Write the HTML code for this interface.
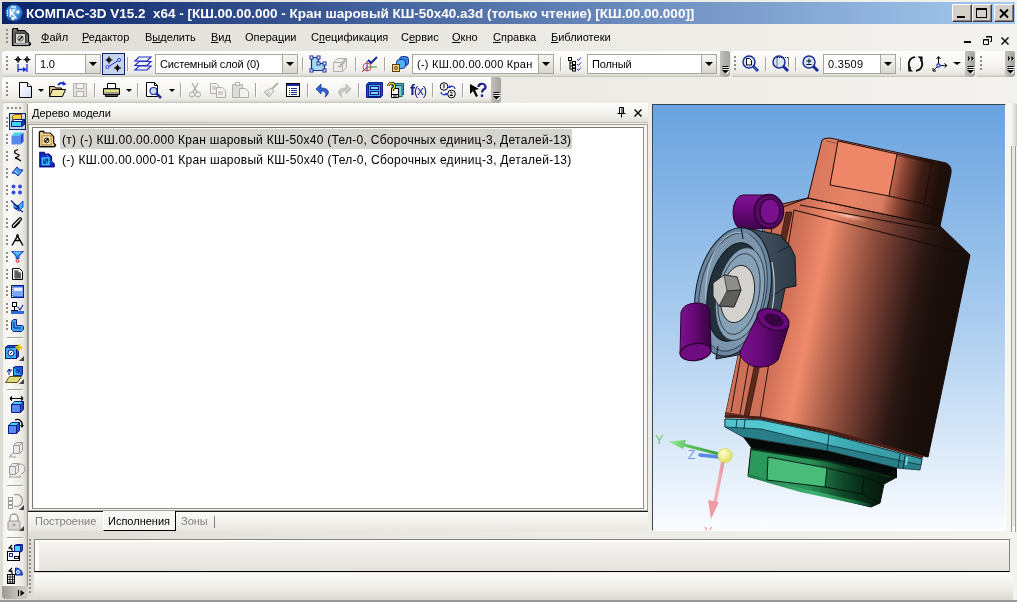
<!DOCTYPE html>
<html><head><meta charset="utf-8">
<style>
*{box-sizing:border-box}
body{margin:0;width:1017px;height:602px;overflow:hidden;background:linear-gradient(to right,#DFDCD4 0%,#E9E7E1 35%,#F3F2EE 100%);position:relative;font-family:"Liberation Sans",sans-serif;font-size:11px;color:#000}
.a{position:absolute}
svg{position:absolute;overflow:visible}
.t{position:absolute;white-space:pre;line-height:13px;will-change:transform}
.tb{position:absolute;border-radius:3px;background:linear-gradient(to bottom,#FEFEFD 0%,#F7F6F3 45%,#ECEAE5 85%,#D9D7CF 96%,#B9B7B0 100%)}
.eh{position:absolute;width:10px;border-radius:0 3px 3px 0;background:linear-gradient(to right,#C4C2BC,#B2B0AA 50%,#A4A29C)}
.grip{position:absolute;width:2px;background:repeating-linear-gradient(to bottom,#8E8C86 0 2px,transparent 2px 4px)}
.sep{position:absolute;width:1px;height:14px;background:#A7A59E;box-shadow:1px 0 0 #fff}
.cb{position:absolute;height:20px;background:#fff;border:1px solid #A8A69F;font-size:11px}
.cb span{position:absolute;left:4px;top:3px;white-space:pre;line-height:13px;will-change:transform;letter-spacing:-0.15px}
.cbb{position:absolute;right:0;top:0;width:15px;height:18px;background:linear-gradient(to bottom,#F7F6F3,#D9D7CF);border-left:1px solid #A8A69F}
.cbb:after{content:"";position:absolute;left:3px;top:7px;border-left:4px solid transparent;border-right:4px solid transparent;border-top:4px solid #000}
.dd{position:absolute;width:0;height:0;border-left:3px solid transparent;border-right:3px solid transparent;border-top:3px solid #000}
.cap{position:absolute;top:4px;width:20px;height:18px;background:#D4D0C8;border:1px solid;border-color:#fff #404040 #404040 #fff;box-shadow:inset -1px -1px 0 #808080}
.u{text-decoration:underline}
</style></head><body>
<!-- title bar -->
<div class="a" style="left:2px;top:2px;width:1013px;height:22px;background:linear-gradient(to right,#0A246A,#A6CAF0)"></div>
<svg style="left:5px;top:4px" width="18" height="18" viewBox="0 0 18 18">
<defs><radialGradient id="kg" cx="45%" cy="40%" r="60%"><stop offset="0" stop-color="#8ACBF8"/><stop offset="0.6" stop-color="#3F8AD8"/><stop offset="1" stop-color="#1A55B0"/></radialGradient></defs>
<circle cx="9" cy="9" r="8.5" fill="url(#kg)"/>
<path d="M2.5 6v6" stroke="#fff" stroke-width="1" stroke-dasharray="1.5 1"/>
<path d="M5.5 5v8M6 9.5l4-4.5M6.5 9l5 5.5" stroke="#fff" stroke-width="1.6" fill="none"/>
<path d="M6 3h5" stroke="#fff" stroke-width="1.2"/>
<circle cx="13" cy="8" r="1.7" fill="#fff"/><circle cx="8" cy="14.5" r="1.7" fill="#fff"/>
</svg>
<div class="t" style="left:26px;top:6px;font-weight:bold;font-size:12px;line-height:16px;color:#fff;transform:scaleX(1.124);transform-origin:0 0">КОМПАС-3D V15.2  x64 - [КШ.00.00.000 - Кран шаровый КШ-50х40.a3d (только чтение) [КШ.00.00.000]]</div>
<div class="cap" style="left:952px"></div>
<div class="cap" style="left:972px"></div>
<div class="cap" style="left:994px"></div>
<div class="a" style="left:957px;top:16px;width:8px;height:2px;background:#000"></div>
<div class="a" style="left:976px;top:8px;width:11px;height:10px;border:1px solid #000;border-top-width:2px"></div>
<svg style="left:999px;top:9px" width="10" height="9" viewBox="0 0 10 9"><path d="M1 0.5L9 8.5M9 0.5L1 8.5" stroke="#000" stroke-width="1.8"/></svg>

<!-- menu bar -->
<div class="grip" style="left:6px;top:29px;height:16px"></div>
<svg style="left:11px;top:27px" width="20" height="20" viewBox="0 0 20 20">
<path d="M1.5 2.5l1-1h4v2h7l4 4v7l2 2v1h-1v1h-17z" fill="#7A7A78" stroke="#000" stroke-width="1.2"/>
<path d="M3 4h10l3 3v9H3z" fill="#5A5A58"/>
<rect x="4.5" y="6.5" width="10" height="10" fill="#D8D8D6" stroke="#3A3A3A" stroke-width="1"/>
<circle cx="9.5" cy="11.5" r="2.6" fill="#fff" stroke="#202020" stroke-width="0.8"/>
<path d="M8 13l3.5-3.5" stroke="#000" stroke-width="1.4"/>
<path d="M2 18.5h15.5" stroke="#000" stroke-width="1.2"/><path d="M3 17h14" stroke="#E8E8E8" stroke-width="1"/>
</svg>
<div class="t" style="left:41px;top:31px"><span class="u">Ф</span>айл</div>
<div class="t" style="left:82px;top:31px"><span class="u">Р</span>едактор</div>
<div class="t" style="left:145px;top:31px">В<span class="u">ы</span>делить</div>
<div class="t" style="left:211px;top:31px"><span class="u">В</span>ид</div>
<div class="t" style="left:245px;top:31px">Опера<span class="u">ц</span>ии</div>
<div class="t" style="left:311px;top:31px">С<span class="u">п</span>ецификация</div>
<div class="t" style="left:401px;top:31px">С<span class="u">е</span>рвис</div>
<div class="t" style="left:452px;top:31px"><span class="u">О</span>кно</div>
<div class="t" style="left:493px;top:31px"><span class="u">С</span>правка</div>
<div class="t" style="left:551px;top:31px"><span class="u">Б</span>иблиотеки</div>
<div class="a" style="left:964px;top:41px;width:7px;height:2px;background:#000"></div>
<svg style="left:983px;top:36px" width="9" height="9" viewBox="0 0 9 9"><path d="M3 .5h5.5v5H7M.5 3.5h5v5h-5z" fill="none" stroke="#000" stroke-width="1"/><path d="M3 1h6M1 4h5" stroke="#000" stroke-width="1"/></svg>
<svg style="left:1001px;top:37px" width="8" height="8" viewBox="0 0 8 8"><path d="M.5 .5l7 7M7.5 .5l-7 7" stroke="#000" stroke-width="1.4"/></svg>

<!-- TOOLBARS -->
<!-- toolbar row 1 -->
<div class="tb" style="left:2px;top:51px;width:722px;height:26px"></div>
<div class="eh" style="left:720px;top:51px;height:26px"></div>
<div class="tb" style="left:731px;top:51px;width:238px;height:26px"></div>
<div class="eh" style="left:965px;top:51px;height:26px"></div>
<div class="tb" style="left:976px;top:51px;width:34px;height:26px"></div>
<div class="eh" style="left:1005px;top:51px;height:26px"></div>
<!-- toolbar row 2 -->
<div class="tb" style="left:2px;top:77px;width:494px;height:26px"></div>
<div class="eh" style="left:491px;top:77px;height:26px"></div>
<!-- end handle glyphs -->
<svg style="left:722px;top:66px" width="8" height="8" viewBox="0 0 8 8"><path d="M1.5 1.5h6M1.5 3.5h6M2 5.5h5l-2.5 2.5z" stroke="#fff" stroke-width="1" fill="#fff"/><path d="M.5 .5h6M.5 2.5h6" stroke="#000" stroke-width="1"/><path d="M0 4h7l-3.5 3.5z" fill="#000"/></svg><svg style="left:967px;top:66px" width="8" height="8" viewBox="0 0 8 8"><path d="M1.5 1.5h6M1.5 3.5h6M2 5.5h5l-2.5 2.5z" stroke="#fff" stroke-width="1" fill="#fff"/><path d="M.5 .5h6M.5 2.5h6" stroke="#000" stroke-width="1"/><path d="M0 4h7l-3.5 3.5z" fill="#000"/></svg><svg style="left:968px;top:56px" width="7" height="6" viewBox="0 0 7 6"><path d="M1 1l2 2-2 2zM4.5 1l2 2-2 2z" fill="#fff"/><path d="M0 0l2.5 2.5L0 5zM3.5 0l2.5 2.5L3.5 5z" fill="#000"/></svg><svg style="left:1007px;top:66px" width="8" height="8" viewBox="0 0 8 8"><path d="M1.5 1.5h6M1.5 3.5h6M2 5.5h5l-2.5 2.5z" stroke="#fff" stroke-width="1" fill="#fff"/><path d="M.5 .5h6M.5 2.5h6" stroke="#000" stroke-width="1"/><path d="M0 4h7l-3.5 3.5z" fill="#000"/></svg><svg style="left:1008px;top:56px" width="7" height="6" viewBox="0 0 7 6"><path d="M1 1l2 2-2 2zM4.5 1l2 2-2 2z" fill="#fff"/><path d="M0 0l2.5 2.5L0 5zM3.5 0l2.5 2.5L3.5 5z" fill="#000"/></svg><svg style="left:493px;top:92px" width="8" height="8" viewBox="0 0 8 8"><path d="M1.5 1.5h6M1.5 3.5h6M2 5.5h5l-2.5 2.5z" stroke="#fff" stroke-width="1" fill="#fff"/><path d="M.5 .5h6M.5 2.5h6" stroke="#000" stroke-width="1"/><path d="M0 4h7l-3.5 3.5z" fill="#000"/></svg>
<!-- grips -->
<div class="grip" style="left:6px;top:56px;height:15px"></div>
<div class="grip" style="left:6px;top:82px;height:15px"></div>
<div class="grip" style="left:734px;top:56px;height:15px"></div>
<div class="grip" style="left:980px;top:56px;height:15px"></div>

<!-- row1 items -->
<svg style="left:14px;top:56px" width="17" height="17" viewBox="0 0 17 17">
<g stroke="#000" stroke-width="1" fill="none"><circle cx="4" cy="3.5" r="1.8"/><path d="M4 0v7M0.5 3.5h7"/><circle cx="13" cy="3.5" r="1.8"/><path d="M13 0v7M9.5 3.5h7"/></g>
<g stroke="#1E2FD0" stroke-width="1.3" fill="none"><path d="M4 8v8M13 8v8M4 13.5h8"/></g><path d="M9 11l4 2.5-4 2.5z" fill="#1E2FD0"/>
</svg>
<div class="cb" style="left:35px;top:54px;width:66px"><span>1.0</span><div class="cbb"></div></div>
<div class="a" style="left:102px;top:53px;width:23px;height:22px;background:#C6D3EC;border:1px solid #0A246A"></div>
<svg style="left:105px;top:56px" width="17" height="17" viewBox="0 0 17 17">
<path d="M3 11L14 4" stroke="#1E2FD0" stroke-width="1"/>
<circle cx="2.5" cy="11" r="1.5" fill="#fff" stroke="#1E2FD0"/><circle cx="14" cy="4" r="1.5" fill="#fff" stroke="#1E2FD0"/>
<g stroke="#000" stroke-width="1.1" fill="none"><circle cx="4" cy="4" r="1.6"/><path d="M4 .5v7M.5 4h7"/><circle cx="12.5" cy="12" r="1.6"/><path d="M12.5 8.5v7M9 12h7"/></g>
</svg>
<div class="sep" style="left:127px;top:57px"></div>
<svg style="left:134px;top:56px" width="18" height="15" viewBox="0 0 18 15">
<g stroke="#1E2FD0" stroke-width="1.2" fill="none"><path d="M5 1h12l-4 4H1zM5 5.5h12l-4 4H1zM5 10h12l-4 4H1z"/></g>
</svg>
<div class="cb" style="left:155px;top:54px;width:143px"><span>Системный слой (0)</span><div class="cbb"></div></div>
<div class="sep" style="left:302px;top:57px"></div>
<svg style="left:310px;top:56px" width="17" height="16" viewBox="0 0 17 16">
<path d="M1.5 1.5h7v6h6v7h-13z" fill="#A9D9EC" stroke="#1A2C9A" stroke-width="1.2"/>
<g fill="#fff" stroke="#1A2C9A" stroke-width="1"><rect x="0" y="0" width="3" height="3"/><rect x="7" y="0" width="3" height="3"/><rect x="7" y="6" width="3" height="3"/><rect x="13" y="6" width="3" height="3"/><rect x="13" y="13" width="3" height="3"/><rect x="0" y="13" width="3" height="3"/></g>
</svg>
<svg style="left:332px;top:56px" width="16" height="16" viewBox="0 0 16 16">
<path d="M1.5 6.5l4-4h9v9l-4 4h-9z" fill="#EEEDEA" stroke="#B3B1AC" stroke-width="1"/><path d="M1.5 6.5h9v9M10.5 6.5l4-4" fill="none" stroke="#B3B1AC"/>
<path d="M6 11l7-9 2 2-7 8z" fill="#B8B6B0"/>
</svg>
<div class="sep" style="left:355px;top:57px"></div>
<svg style="left:361px;top:55px" width="18" height="18" viewBox="0 0 18 18">
<path d="M7 5l3 3 6-6" stroke="#1A2C9A" stroke-width="2" fill="none"/>
<path d="M6 6v10" stroke="#1E2FD0" stroke-width="1"/><path d="M6 12h10" stroke="#2A9A30" stroke-width="1"/><path d="M1 17l5-5" stroke="#E02020" stroke-width="1"/>
<circle cx="6" cy="12" r="4" fill="none" stroke="#C03030" stroke-width="0.8"/>
</svg>
<div class="sep" style="left:384px;top:57px"></div>
<svg style="left:392px;top:56px" width="17" height="16" viewBox="0 0 17 16">
<rect x="7.5" y="0.5" width="9" height="9" rx="3" fill="#2A8EE0" stroke="#1A2C9A"/>
<rect x="4.5" y="3.5" width="9" height="9" rx="3" fill="#4FB2F0" stroke="#1A2C9A"/>
<rect x="0.5" y="8.5" width="7" height="7" fill="#F3D27A" stroke="#5A4010"/><circle cx="4" cy="12" r="1.5" fill="none" stroke="#5A4010"/>
</svg>
<div class="cb" style="left:412px;top:54px;width:142px"><span style="letter-spacing:0.25px">(-) КШ.00.00.000 Кран</span><div class="cbb"></div></div>
<div class="sep" style="left:560px;top:57px"></div>
<svg style="left:567px;top:56px" width="16" height="16" viewBox="0 0 16 16">
<g fill="none" stroke="#000" stroke-width="1"><rect x="1.5" y="1.5" width="3" height="3"/><path d="M3 4.5v9M3 7h3M3 10h3M3 13h3"/><rect x="5.5" y="5.5" width="3" height="3"/><rect x="5.5" y="9.5" width="3" height="3"/><rect x="5.5" y="12" width="3" height="3"/></g>
<path d="M10 3l1.5 1.5L14 1.5M10 8l1.5 1.5L14 6.5M10 13l1.5 1.5L14 11.5" stroke="#1E2FD0" stroke-width="1" fill="none"/>
</svg>
<div class="cb" style="left:587px;top:54px;width:130px"><span>Полный</span><div class="cbb"></div></div>

<!-- toolbar 3 -->
<svg style="left:742px;top:55px" width="18" height="18" viewBox="0 0 18 18">
<path d="M11 11l5 5" stroke="#1A2C9A" stroke-width="3"/><path d="M11.5 11.5l4 4" stroke="#6A8CE0" stroke-width="1"/>
<circle cx="7" cy="7" r="6" fill="#D8E6FA" stroke="#1A2C9A" stroke-width="1.5"/>
<path d="M4.5 3.5h3l2 2v4.5h-5z" fill="#fff" stroke="#000" stroke-width="1"/>
</svg>
<div class="sep" style="left:765px;top:57px"></div>
<svg style="left:772px;top:55px" width="18" height="18" viewBox="0 0 18 18">
<path d="M11 11l5 5" stroke="#1A2C9A" stroke-width="3"/>
<circle cx="7" cy="7" r="6" fill="#D8E6FA" stroke="#1A2C9A" stroke-width="1.5"/>
<path d="M5 2.5h12M16.5 2.5v9M5 2.5v9" stroke="#000" stroke-width="1" stroke-dasharray="1 1" fill="none"/>
</svg>
<div class="sep" style="left:795px;top:57px"></div>
<svg style="left:802px;top:55px" width="18" height="18" viewBox="0 0 18 18">
<path d="M11 11l5 5" stroke="#1A2C9A" stroke-width="3"/>
<circle cx="7" cy="7" r="6" fill="#D8E6FA" stroke="#1A2C9A" stroke-width="1.5"/>
<path d="M7 3.5v5M4.5 6h5M4.5 9.5h5" stroke="#000" stroke-width="1"/>
</svg>
<div class="cb" style="left:823px;top:54px;width:73px"><span style="letter-spacing:0.3px">0.3509</span><div class="cbb"></div></div>
<div class="sep" style="left:900px;top:57px"></div>
<svg style="left:906px;top:55px" width="19" height="18" viewBox="0 0 19 18">
<path d="M9 2.2A6.8 6.8 0 0 0 4.5 13.5" stroke="#000" stroke-width="1.8" fill="none"/>
<path d="M2 11.5L7 16.5L2.5 16.5Z" fill="#000"/>
<path d="M10 15.8A6.8 6.8 0 0 0 14.5 4.5" stroke="#000" stroke-width="1.8" fill="none"/>
<path d="M11.5 1.5L16.5 1.5L16.5 6Z" fill="#000"/>
</svg>
<svg style="left:931px;top:55px" width="18" height="18" viewBox="0 0 18 18">
<path d="M7.5 10.5V2M7.5 10.5H16M7.5 10.5L2 16" stroke="#000" stroke-width="1" fill="none"/>
<path d="M5.5 4l2-2.5 2 2.5M13.5 8.5l2.5 2-2.5 2M2 13v3h3" stroke="#000" stroke-width="1" fill="none"/>
<circle cx="7.5" cy="10.5" r="1.6" fill="#fff" stroke="#1E2FD0" stroke-width="1.2"/>
</svg>
<div class="dd" style="left:953px;top:62px;border-width:3px 4px 0 4px;border-left-color:transparent;border-right-color:transparent"></div>

<!-- row2 items -->
<svg style="left:19px;top:82px" width="13" height="16" viewBox="0 0 13 16">
<defs><linearGradient id="pg" x1="0" y1="0" x2="1" y2="1"><stop offset="0" stop-color="#fff"/><stop offset="1" stop-color="#D5E0F5"/></linearGradient></defs>
<path d="M.5 .5h8l4 4v11h-12z" fill="url(#pg)" stroke="#000"/><path d="M8.5 .5v4h4" fill="#fff" stroke="#000"/>
</svg>
<div class="dd" style="left:38px;top:89px;border-width:3px 3px 0 3px"></div>
<svg style="left:49px;top:81px" width="18" height="16" viewBox="0 0 18 16">
<path d="M.5 5.5h5l1 1.5h6v8h-12z" fill="#D6C47A" stroke="#000"/>
<path d="M.5 15.5l3-7h13l-3 7z" fill="#F3E7A8" stroke="#000"/>
<path d="M9 4A5 5 0 0 1 15.5 3" stroke="#1E2FD0" stroke-width="2" fill="none"/><path d="M14 0l3.5 3.5-4 1z" fill="#1E2FD0"/>
</svg>
<svg style="left:73px;top:83px" width="14" height="14" viewBox="0 0 14 14">
<rect x=".5" y=".5" width="13" height="13" fill="#E4E3DF" stroke="#B5B3AE"/><rect x="3.5" y=".5" width="7" height="5" fill="#F2F1EE" stroke="#B5B3AE"/><rect x="3.5" y="8.5" width="7" height="5" fill="#F2F1EE" stroke="#B5B3AE"/>
</svg>
<div class="sep" style="left:94px;top:83px"></div>
<svg style="left:103px;top:83px" width="17" height="14" viewBox="0 0 17 14">
<path d="M4.5 .5h8v5h-8z" fill="#fff" stroke="#000"/>
<path d="M.5 5.5h16v6h-16z" fill="#9A9A96" stroke="#000"/><path d="M1 8h15" stroke="#E8E070" stroke-width="2"/>
<path d="M2.5 11.5h12v2h-12z" fill="#555" stroke="#000"/>
</svg>
<div class="dd" style="left:126px;top:89px;border-width:3px 3px 0 3px"></div>
<div class="sep" style="left:137px;top:83px"></div>
<svg style="left:146px;top:82px" width="18" height="17" viewBox="0 0 18 17">
<path d="M.5 .5h8l3 3v11h-11z" fill="#fff" stroke="#000"/><path d="M8.5 .5v3h3" fill="none" stroke="#000"/>
<path d="M10 11l5 5" stroke="#1A2C9A" stroke-width="2.5"/>
<circle cx="7.5" cy="9" r="3.5" fill="#C6DAF8" stroke="#1A2C9A" stroke-width="1.2"/>
</svg>
<div class="dd" style="left:169px;top:89px;border-width:3px 3px 0 3px"></div>
<div class="sep" style="left:180px;top:83px"></div>
<svg style="left:189px;top:82px" width="12" height="16" viewBox="0 0 12 16">
<path d="M3 1l5 9M9 1L4 10" stroke="#A8A6A0" stroke-width="1.2"/><circle cx="3" cy="12.5" r="2.5" fill="none" stroke="#A8A6A0"/><circle cx="9" cy="12.5" r="2.5" fill="none" stroke="#A8A6A0"/>
</svg>
<svg style="left:210px;top:83px" width="16" height="15" viewBox="0 0 16 15">
<path d="M.5 .5h6l2 2v8h-8z" fill="#F3F2EF" stroke="#B0AEA8"/><path d="M6.5 4.5h6l3 3v7h-9z" fill="#F3F2EF" stroke="#B0AEA8"/><path d="M8 9h5M8 11h5M2 4h4M2 6h4" stroke="#B0AEA8"/>
</svg>
<svg style="left:232px;top:82px" width="17" height="16" viewBox="0 0 17 16">
<path d="M.5 2.5h10v13h-10z" fill="#DEDCD6" stroke="#B0AEA8"/><path d="M3.5 .5h4v3h-4z" fill="#F3F2EF" stroke="#B0AEA8"/><path d="M7.5 6.5h6l3 3v6h-9z" fill="#F3F2EF" stroke="#B0AEA8"/>
</svg>
<div class="sep" style="left:255px;top:83px"></div>
<svg style="left:263px;top:82px" width="16" height="16" viewBox="0 0 16 16">
<path d="M15 1L9 7" stroke="#B5B3AE" stroke-width="2"/><path d="M8 6l3 3-5 6-5-5z" fill="#E9E8E4" stroke="#B5B3AE"/><path d="M3 11l3 3M4.5 9.5l3 3" stroke="#B5B3AE"/>
</svg>
<svg style="left:286px;top:83px" width="14" height="14" viewBox="0 0 14 14">
<rect x=".5" y=".5" width="13" height="13" fill="#fff" stroke="#000"/><rect x="1" y="1" width="12" height="2" fill="#1A2C9A"/>
<path d="M3 5.5h8M3 7.5h8M3 9.5h8M3 11.5h8" stroke="#1A2C9A" stroke-width="1"/><path d="M4.5 4v9" stroke="#fff"/>
</svg>
<div class="sep" style="left:307px;top:83px"></div>
<svg style="left:316px;top:83px" width="14" height="15" viewBox="0 0 14 15">
<path d="M5 1L0 6l5 5V8c4 0 6 2 4 6 5-3 5-9-4-9z" fill="#2A64D8" stroke="#1A3A9A" stroke-width="0.8"/>
</svg>
<svg style="left:337px;top:83px" width="14" height="15" viewBox="0 0 14 15">
<path d="M9 1l5 5-5 5V8C5 8 3 10 5 14 0 11 0 5 9 5z" fill="#C9C8C4" stroke="#B5B3AE" stroke-width="0.8"/>
</svg>
<div class="sep" style="left:358px;top:83px"></div>
<svg style="left:366px;top:82px" width="17" height="16" viewBox="0 0 17 16">
<path d="M.5 2.5l2-2h14v13l-2 2h-14z" fill="#1E4FD0" stroke="#0A1E8A"/><rect x="2.5" y="2.5" width="12" height="12" fill="#3DB2F0" stroke="#0A1E8A"/>
<rect x="4.5" y="4.5" width="8" height="3" fill="#8FD8F8" stroke="#0A1E8A"/><rect x="4.5" y="9.5" width="8" height="3" fill="#8FD8F8" stroke="#0A1E8A"/>
</svg>
<svg style="left:387px;top:82px" width="18" height="16" viewBox="0 0 18 16">
<rect x="6.5" y="1.5" width="10" height="11" fill="#58B8C8" stroke="#1A5A6A"/><rect x="5" y="3.5" width="10" height="11" fill="#7ACED8" stroke="#1A5A6A"/>
<rect x="4.5" y="6.5" width="7" height="6" fill="#fff" stroke="#000"/><path d="M4.5 12.5h7v3h-7zM7 12.5v3M9 12.5v3" fill="#fff" stroke="#000"/>
<path d="M1.5 4a3 3 0 1 1 4 3v2" stroke="#000" stroke-width="2.6" fill="none"/><path d="M1.5 4a3 3 0 1 1 4 3v2" stroke="#F3E030" stroke-width="1.2" fill="none"/>
</svg>
<div class="t" style="left:410px;top:82px;font-size:15px;line-height:16px;color:#1A1F8A;font-weight:bold;letter-spacing:-1px">f<span style="font-weight:normal;font-size:13px">(x)</span></div>
<div class="sep" style="left:432px;top:83px"></div>
<svg style="left:439px;top:82px" width="18" height="17" viewBox="0 0 18 17">
<circle cx="5" cy="4.5" r="3.8" fill="#fff" stroke="#000"/><circle cx="12.5" cy="12" r="3.8" fill="#fff" stroke="#000"/>
<path d="M5 2.5v4M4 3.5l1-1" stroke="#000" stroke-width="1"/><path d="M11 10.5c1-1 3 0 1.5 1.5l-1.5 1.5h3" stroke="#000" stroke-width="1" fill="none"/>
<path d="M11 5a3 3 0 0 1 5 2" stroke="#1E2FD0" stroke-width="1.2" fill="none"/><path d="M10 3l2 3-3 0z" fill="#1E2FD0"/>
<path d="M7 12a3 3 0 0 1-5-2" stroke="#1E2FD0" stroke-width="1.2" fill="none"/><path d="M8 14l-2-3 3 0z" fill="#1E2FD0"/>
</svg>
<div class="sep" style="left:462px;top:83px"></div>
<svg style="left:469px;top:83px" width="18" height="15" viewBox="0 0 18 15">
<path d="M1 1l9 5-4 1 3 6-2 1-3-6-3 3z" fill="#000"/>
<path d="M9.5 4a3.5 3 0 1 1 5 2.5c-1 .7-1.5 1.3-1.5 3" stroke="#1A1F8A" stroke-width="2.2" fill="none"/><rect x="11.8" y="11.5" width="2.4" height="2.4" fill="#1A1F8A"/>
</svg>


<!-- left vertical toolbar -->
<div class="a" style="left:3px;top:103px;width:25px;height:495px;border-radius:3px;background:linear-gradient(to right,#F4F3EF 0%,#FBFAF8 30%,#EAE8E2 80%,#C9C6BD 100%)"></div>
<div class="a" style="left:27px;top:104px;width:1px;height:482px;background:#95938E"></div>
<div class="a" style="left:7px;top:107px;width:14px;height:2px;background:repeating-linear-gradient(to right,#8E8C86 0 2px,transparent 2px 4px)"></div>
<div class="grip" style="left:6px;top:117px;height:10px"></div>
<div class="grip" style="left:6px;top:134px;height:10px"></div>
<div class="grip" style="left:6px;top:151px;height:10px"></div>
<div class="grip" style="left:6px;top:168px;height:10px"></div>
<div class="grip" style="left:6px;top:185px;height:10px"></div>
<div class="grip" style="left:6px;top:201px;height:10px"></div>
<div class="grip" style="left:6px;top:218px;height:10px"></div>
<div class="grip" style="left:6px;top:235px;height:10px"></div>
<div class="grip" style="left:6px;top:252px;height:10px"></div>
<div class="grip" style="left:6px;top:269px;height:10px"></div>
<div class="grip" style="left:6px;top:286px;height:10px"></div>
<div class="grip" style="left:6px;top:303px;height:10px"></div>
<div class="grip" style="left:6px;top:320px;height:10px"></div>
<div class="a" style="left:9px;top:113px;width:17px;height:17px;background:#C6D3EC;border:1px solid #0A246A"></div>
<svg style="left:11px;top:114px" width="14" height="14" viewBox="0 0 14 14">
<path d="M1.5 2.5l2-2h7v5h-9z" fill="#F8D040" stroke="#8A4A10"/><path d="M10.5 .5v5" stroke="#8A4A10"/>
<path d="M.5 7.5l3-2h10l-3 2z" fill="#fff" stroke="#0A1E8A"/>
<path d="M.5 7.5h10v5h-10z" fill="#40D8F0" stroke="#0A1E8A"/><path d="M10.5 7.5l3-2v5l-3 2z" fill="#1A3AC0" stroke="#0A1E8A"/>
</svg>
<svg style="left:11px;top:132px" width="13" height="13" viewBox="0 0 13 13">
<path d="M.5 3.5l3-3h9l-3 3z" fill="#40D8F8"/><path d="M.5 3.5h9v9h-9z" fill="#5A8AF0"/><path d="M9.5 3.5l3-3v9l-3 3z" fill="#2A4AD0"/>
</svg>
<svg style="left:13px;top:149px" width="9" height="13" viewBox="0 0 9 13"><path d="M5 .5C0 2 1 4 4 5s3 2-2 4c3 0 4 2 6 3" stroke="#000" stroke-width="1.3" fill="none"/></svg>
<svg style="left:11px;top:166px" width="13" height="13" viewBox="0 0 13 13"><path d="M1 7l5-6c1 2 3 3 6 3l-5 6C6 8 4 7 1 7z" fill="#4A9AF0" stroke="#0A2AB0"/><path d="M4 5l3 3" stroke="#A8E0FF"/></svg>
<svg style="left:11px;top:184px" width="12" height="11" viewBox="0 0 12 11"><g fill="#3050E0"><circle cx="2.5" cy="2.5" r="2"/><circle cx="9" cy="2.5" r="2"/><circle cx="2.5" cy="8.5" r="2"/><circle cx="9" cy="8.5" r="2"/></g></svg>
<svg style="left:11px;top:200px" width="13" height="13" viewBox="0 0 13 13"><path d="M3 4l4 2 5-5v6l-4 4-5-3z" fill="#40B0F0" stroke="#0A2AB0" stroke-width="0.8"/><path d="M0 .5l8 8M7 5l1 4-4-1M9 10l3 2" stroke="#0A1E8A" stroke-width="1.2" fill="none"/></svg>
<svg style="left:11px;top:217px" width="12" height="12" viewBox="0 0 12 12"><path d="M3 10l7-7c1-1 0-3-1.5-2L2 7.5c-2 2 0 4 2 2.5l5-5" stroke="#000" stroke-width="1.2" fill="none"/></svg>
<svg style="left:11px;top:234px" width="13" height="12" viewBox="0 0 13 12"><path d="M1 11.5L6.5 2 12 11.5M4.5 6.5h4" stroke="#000" stroke-width="1.4" fill="none"/><circle cx="6.5" cy="1.5" r="1.3" fill="#000"/></svg>
<svg style="left:11px;top:250px" width="13" height="13" viewBox="0 0 13 13"><path d="M.5 1.5h12L8 6v2.5H5V6z" fill="#2A8AF0" stroke="#0A2AB0" stroke-width="0.8"/><path d="M2 1.5h9L7 5H6z" fill="#60C0FF"/><circle cx="6.5" cy="11" r="1.4" fill="none" stroke="#E02020"/></svg>
<svg style="left:12px;top:268px" width="11" height="12" viewBox="0 0 11 12"><path d="M.5 .5h7l3 3v8h-10z" fill="#fff" stroke="#000"/><path d="M2 3h4M2 5h7M2 7h7M2 9h7M4 3v8M6 3v8M8 5v6" stroke="#000" stroke-width="0.8"/></svg>
<svg style="left:11px;top:285px" width="13" height="13" viewBox="0 0 13 13"><rect x=".5" y=".5" width="12" height="12" fill="#3A6AF0" stroke="#0A1E8A"/><rect x="2.5" y="2.5" width="9" height="8" fill="#E8F0FF"/><rect x="2.5" y="6" width="9" height="4.5" fill="#7AA8F8"/><path d="M1.5 1v11" stroke="#fff" stroke-dasharray="1 1"/></svg>
<svg style="left:11px;top:302px" width="13" height="13" viewBox="0 0 13 13"><rect x="1.5" y=".5" width="4" height="4" fill="#fff" stroke="#000"/><path d="M3.5 4.5v4" stroke="#000"/><path d="M0 9h13v3H0z" fill="#2A6AE0"/><path d="M0 8.5h7" stroke="#000"/><path d="M7 5l2 3 3-5" stroke="#1A2AB0" stroke-width="1.2" fill="none"/></svg>
<svg style="left:11px;top:319px" width="13" height="13" viewBox="0 0 13 13"><path d="M.5 2.5l2-2h3v6h6l1 1v3l-2 2h-8l-2-2z" fill="#40A8F0" stroke="#0A1E8A"/><path d="M3 3v6h7" stroke="#0A1E8A" fill="none"/></svg>
<div class="a" style="left:7px;top:337px;width:16px;height:1px;background:#A5A39C;box-shadow:0 1px 0 #fff"></div>
<svg style="left:5px;top:344px" width="19" height="17" viewBox="0 0 19 17">
<path d="M.5 3.5l2-2h11v11l-2 2H.5z" fill="#1A5AD0" stroke="#0A1E8A"/><rect x=".5" y="3.5" width="11" height="11" fill="#3AB0F0" stroke="#0A1E8A"/>
<circle cx="6" cy="9" r="3" fill="#fff" stroke="#0A1E8A"/><path d="M5 10l2-2" stroke="#0A1E8A"/>
<path d="M14 0v7M10.5 3.5h7" stroke="#F8E020" stroke-width="2.4"/><path d="M14 .5v6M11 3.5h6" stroke="#8A7000" stroke-width="0.4"/>
<path d="M19 12v5h-5z" fill="#404040"/>
</svg>
<svg style="left:5px;top:366px" width="19" height="18" viewBox="0 0 19 18">
<path d="M.5 16.5l4-6h12l-4 6z" fill="#E0D880" stroke="#5A5010"/>
<rect x="8.5" y="1.5" width="8" height="8" fill="#3AB0F0" stroke="#0A1E8A"/><path d="M8.5 1.5l2-1h7v8l-1 1" fill="#1A5AD0" stroke="#0A1E8A"/><circle cx="12.5" cy="5.5" r="1.5" fill="none" stroke="#0A1E8A"/>
<path d="M4 9V4l3 0" stroke="#0A1E8A" fill="none"/><path d="M2 6l2-3 2 3" stroke="#0A1E8A" fill="none"/>
<path d="M19 13v5h-5z" fill="#404040"/>
</svg>
<div class="a" style="left:7px;top:389px;width:16px;height:1px;background:#A5A39C;box-shadow:0 1px 0 #fff"></div>
<svg style="left:9px;top:396px" width="15" height="17" viewBox="0 0 15 17">
<path d="M1 2.5h13M1 2.5l2-2M1 2.5l2 2M14 2.5l-2-2M14 2.5l-2 2" stroke="#000" stroke-width="1.2" fill="none"/>
<path d="M2.5 8.5l3-3h9l-3 3z" fill="#40D8F8" stroke="#0A1E8A"/><path d="M2.5 8.5h9v8h-9z" fill="#5A8AF0" stroke="#0A1E8A"/><path d="M11.5 8.5l3-3v8l-3 3z" fill="#2A4AD0" stroke="#0A1E8A"/>
</svg>
<svg style="left:8px;top:418px" width="16" height="17" viewBox="0 0 16 17">
<path d="M.5 7.5l3-3h8l-3 3z" fill="#40D8F8" stroke="#0A1E8A"/><path d="M.5 7.5h8v8h-8z" fill="#5A8AF0" stroke="#0A1E8A"/><path d="M8.5 7.5l3-3v8l-3 3z" fill="#2A4AD0" stroke="#0A1E8A"/>
<path d="M7 2a5 5 0 0 1 7 6" stroke="#000" stroke-width="1.2" fill="none"/><path d="M12 7l2 3 2-3z" fill="#000"/>
</svg>
<svg style="left:8px;top:441px" width="16" height="17" viewBox="0 0 16 17" opacity="0.95">
<path d="M5.5 4.5l3-3h6v8l-3 3h-6z" fill="#E8E8E6" stroke="#9A9894"/><path d="M5.5 4.5h6v8M11.5 4.5l3-3" stroke="#9A9894" fill="none"/>
<path d="M5 12l-4 4M1 16h7M2 14h2" stroke="#9A9894" fill="none"/>
</svg>
<svg style="left:8px;top:462px" width="17" height="17" viewBox="0 0 17 17" opacity="0.95">
<path d="M1.5 4.5l3-3h6v8l-3 3h-6z" fill="#E8E8E6" stroke="#9A9894"/><path d="M1.5 4.5h6v8M7.5 4.5l3-3" stroke="#9A9894" fill="none"/>
<path d="M11 2a5 5 0 0 1 2 10" stroke="#9A9894" fill="none"/><path d="M1 15h12M1 15l2-1.5M13 15l-2-1.5" stroke="#9A9894" fill="none"/>
</svg>
<div class="a" style="left:7px;top:485px;width:16px;height:1px;background:#A5A39C;box-shadow:0 1px 0 #fff"></div>
<svg style="left:6px;top:492px" width="19" height="18" viewBox="0 0 19 18" opacity="0.95">
<path d="M8 3a6 6 0 1 1 0 11" stroke="#9A9894" stroke-width="1.2" fill="none"/>
<rect x="2.5" y="5.5" width="4" height="3" fill="#fff" stroke="#9A9894"/><rect x="2.5" y="9.5" width="4" height="3" fill="#fff" stroke="#9A9894"/><rect x="2.5" y="13.5" width="4" height="3" fill="#fff" stroke="#9A9894"/>
</svg>
<div class="a" style="left:19px;top:505px;width:0;height:0;border-left:5px solid transparent;border-bottom:5px solid #404040"></div>
<svg style="left:6px;top:514px" width="19" height="17" viewBox="0 0 19 17" opacity="0.95">
<path d="M4 7V4a4 4 0 0 1 8 0v3" stroke="#9A9894" stroke-width="1.4" fill="none"/><rect x="2" y="7" width="12" height="9" rx="1" fill="#D8D6D2" stroke="#9A9894"/><circle cx="8" cy="11" r="1.3" fill="#9A9894"/>
</svg>
<div class="a" style="left:19px;top:526px;width:0;height:0;border-left:5px solid transparent;border-bottom:5px solid #404040"></div>
<div class="a" style="left:7px;top:537px;width:16px;height:1px;background:#A5A39C;box-shadow:0 1px 0 #fff"></div>
<svg style="left:7px;top:544px" width="16" height="17" viewBox="0 0 16 17">
<rect x=".5" y="7.5" width="12" height="9" fill="#fff" stroke="#000"/><rect x="2.5" y="9.5" width="3" height="3" fill="none" stroke="#1A2AB0"/><rect x="7.5" y="12.5" width="4" height="2" fill="none" stroke="#000"/>
<path d="M7.5 1.5l2-1h6v6l-2 2" fill="#1A5AD0" stroke="#0A1E8A"/><rect x="7.5" y="1.5" width="6" height="6" fill="#40D8F8" stroke="#0A1E8A"/>
<path d="M5 1L2 4l3 1M2 4h3v3" stroke="#000" stroke-width="1.1" fill="none"/>
</svg>
<svg style="left:7px;top:567px" width="16" height="17" viewBox="0 0 16 17">
<rect x=".5" y="7.5" width="7" height="9" fill="#fff" stroke="#000"/><path d="M.5 10h7M.5 12.5h7M.5 15h7M3 7.5v9M5.5 7.5v9" stroke="#000" stroke-width="0.8"/>
<path d="M8.5 1v7h7c0-4-3-7-7-7z" fill="#2A6AE0" stroke="#0A1E8A"/><circle cx="11" cy="5" r="1.5" fill="none" stroke="#fff"/>
<path d="M5 1L2 4l3 1M2 4h3v3" stroke="#000" stroke-width="1.1" fill="none"/>
</svg>
<div class="a" style="left:2px;top:586px;width:26px;height:13px;border-radius:0 0 3px 4px;background:linear-gradient(to right,#9C9A94,#B8B6B0 40%,#D2D0CA)"></div>
<svg style="left:18px;top:590px" width="7" height="6" viewBox="0 0 7 6"><path d="M.5 0v6" stroke="#000"/><path d="M2.5 0l4 3-4 3z" fill="#000"/></svg>


<!-- panel header -->
<div class="a" style="left:28px;top:103px;width:620px;height:20px;background:linear-gradient(to bottom,#FFFFFF,#F2F1ED 60%,#E2E0D9);border-bottom:1px solid #C5C3BC"></div>
<div class="t" style="left:32px;top:107px">Дерево модели</div>
<svg style="left:617px;top:107px" width="9" height="11" viewBox="0 0 9 11"><path d="M2.5 .5h4v6h-4zM.5 6.5h8M4.5 6.5v4" stroke="#000" stroke-width="1" fill="none"/><path d="M5 1v5" stroke="#000" stroke-width="1"/></svg>
<svg style="left:634px;top:109px" width="8" height="8" viewBox="0 0 8 8"><path d="M.5 .5l7 7M7.5 .5l-7 7" stroke="#000" stroke-width="1.4"/></svg>
<!-- tree box -->
<div class="a" style="left:28px;top:124px;width:620px;height:387px;border:1px solid #A3A19B;background:#F5F4F0"></div>
<div class="a" style="left:32px;top:127px;width:612px;height:382px;border:1px solid #7B7974;border-right-color:#8E8C88;border-bottom-color:#8E8C88;background:#fff"></div>
<div class="a" style="left:60px;top:129px;width:512px;height:20px;background:#D6D4CE"></div>
<div class="t" style="left:62px;top:133px;font-size:12px;line-height:15px;letter-spacing:0.28px">(т) (-) КШ.00.00.000 Кран шаровый КШ-50х40 (Тел-0, Сборочных единиц-3, Деталей-13)</div>
<div class="t" style="left:62px;top:153px;font-size:12px;line-height:15px;letter-spacing:0.28px">(-) КШ.00.00.000-01 Кран шаровый КШ-50х40 (Тел-0, Сборочных единиц-3, Деталей-13)</div>
<svg style="left:38px;top:130px" width="18" height="18" viewBox="0 0 20 20">
<path d="M1.5 2.5l1-1h4v2h7l4 4v7l2 2v1h-1v1h-17z" fill="#E8C27A" stroke="#000" stroke-width="1.3"/>
<path d="M3 4h10l3 3v9H3z" fill="#F3D08A"/>
<rect x="4.5" y="6.5" width="10" height="10" fill="#FBE2AE" stroke="#8A6A2A" stroke-width="0.8"/>
<circle cx="9.5" cy="11.5" r="2.6" fill="#FFF4DA" stroke="#000" stroke-width="1"/>
<path d="M8 13l3.5-3.5" stroke="#000" stroke-width="1.6"/>
<path d="M2 18.5h15.5" stroke="#000" stroke-width="1.3"/>
</svg>
<svg style="left:38px;top:150px" width="18" height="18" viewBox="0 0 20 20">
<path d="M2 2.5h5v2h5l3 3v5l3 3v3h-16z" fill="#1A2AC8" stroke="#0A0A80" stroke-width="1.3"/>
<rect x="4" y="8" width="9" height="9" fill="#30C8F0"/>
<circle cx="8.5" cy="12.5" r="2.6" fill="none" stroke="#0A1A9A" stroke-width="1"/>
<path d="M6 15l5-5" stroke="#0A1A9A" stroke-width="1.4"/>
<path d="M9 5l3 3M14 12l2 2" stroke="#6A8AF0" stroke-width="1"/>
<path d="M2 18.5h15.5" stroke="#0A0A80" stroke-width="1.3"/>
</svg>

<!-- tabs -->
<div class="a" style="left:28px;top:511px;width:620px;height:20px;background:linear-gradient(to bottom,#FAFAF8,#E9E7E1);border-top:1px solid #1A1A1A"></div>
<div class="a" style="left:103px;top:511px;width:73px;height:20px;background:#F7F7F5;border:1px solid #000;border-top:none;border-left-color:#fff"></div>
<div class="t" style="left:35px;top:515px;color:#808080">Построение</div>
<div class="t" style="left:108px;top:515px">Исполнения</div>
<div class="t" style="left:181px;top:515px;color:#808080">Зоны</div>
<div class="a" style="left:214px;top:516px;width:1px;height:12px;background:#808080"></div>

<!-- 3D view -->
<div class="a" style="left:652px;top:104px;width:354px;height:427px;border:1px solid #3C4650;border-right-color:#fff;border-bottom-color:#fff;background:linear-gradient(to bottom,#6AA3DF 0%,#A9CBEE 50%,#FAFCFF 100%)"></div>
<svg style="left:0;top:0" width="1017" height="602" viewBox="0 0 1017 602">
<defs>
<clipPath id="vc"><rect x="653" y="105" width="352" height="425"/></clipPath>
<linearGradient id="cu" gradientUnits="userSpaceOnUse" x1="725" y1="417" x2="940" y2="462">
<stop offset="0" stop-color="#B4604A"/><stop offset="0.16" stop-color="#D07058"/><stop offset="0.29" stop-color="#F08A6C"/><stop offset="0.40" stop-color="#BA6A52"/><stop offset="0.51" stop-color="#8A4A3A"/><stop offset="0.62" stop-color="#5A3028"/><stop offset="0.73" stop-color="#2C1814"/><stop offset="0.82" stop-color="#1C100C"/><stop offset="1" stop-color="#140B08"/>
</linearGradient>
<linearGradient id="cun" gradientUnits="userSpaceOnUse" x1="808" y1="198" x2="952" y2="228">
<stop offset="0" stop-color="#D8785C"/><stop offset="0.3" stop-color="#E88468"/><stop offset="0.5" stop-color="#DA7C60"/><stop offset="0.6" stop-color="#8E4634"/><stop offset="0.72" stop-color="#3E1E16"/><stop offset="0.85" stop-color="#1E0F0A"/><stop offset="1" stop-color="#180C08"/>
</linearGradient>
<radialGradient id="hl" cx="50%" cy="50%" r="50%"><stop offset="0" stop-color="#FFD8C8" stop-opacity="0.9"/><stop offset="1" stop-color="#F08A6C" stop-opacity="0"/></radialGradient>
<linearGradient id="tl" gradientUnits="userSpaceOnUse" x1="725" y1="0" x2="923" y2="0">
<stop offset="0" stop-color="#50C4CE"/><stop offset="0.35" stop-color="#56C8D2"/><stop offset="0.65" stop-color="#3AA6B0"/><stop offset="1" stop-color="#3896A0"/>
</linearGradient>
<linearGradient id="gr" gradientUnits="userSpaceOnUse" x1="748" y1="0" x2="884" y2="0">
<stop offset="0" stop-color="#2C9A5C"/><stop offset="0.45" stop-color="#2A9258"/><stop offset="0.7" stop-color="#0E4828"/><stop offset="0.85" stop-color="#082A16"/><stop offset="1" stop-color="#06180E"/>
</linearGradient>
<linearGradient id="grb" gradientUnits="userSpaceOnUse" x1="748" y1="0" x2="880" y2="0">
<stop offset="0" stop-color="#1E7A46"/><stop offset="0.5" stop-color="#3DB574"/><stop offset="0.8" stop-color="#1E7A46"/><stop offset="1" stop-color="#06180E"/>
</linearGradient>
<linearGradient id="pu" x1="0" y1="0" x2="0" y2="1"><stop offset="0" stop-color="#7E1492"/><stop offset="0.35" stop-color="#6E0A80"/><stop offset="1" stop-color="#40044C"/></linearGradient>
<linearGradient id="pu2" x1="0" y1="0" x2="1" y2="0"><stop offset="0" stop-color="#7A1290"/><stop offset="0.5" stop-color="#620872"/><stop offset="1" stop-color="#36043F"/></linearGradient>
<linearGradient id="sl" gradientUnits="userSpaceOnUse" x1="740" y1="0" x2="796" y2="0"><stop offset="0" stop-color="#4A5A6A"/><stop offset="1" stop-color="#2E3A46"/></linearGradient>
<radialGradient id="ys" cx="40%" cy="35%" r="60%"><stop offset="0" stop-color="#FFFFD8"/><stop offset="1" stop-color="#E0E060"/></radialGradient>
</defs>
<g clip-path="url(#vc)" stroke-linejoin="round">
<!-- body cylinder -->
<path d="M770 207 L808 198 L940 226 L970 255 L928 457 L760 418 L725 417 Z" fill="url(#cu)" stroke="#1A0A06" stroke-width="1"/>
<path d="M794 210 L968 254" stroke="#1A0A06" stroke-width="1" fill="none"/>
<!-- left boss faces -->
<path d="M770 207 L794 210 L760 418 L725 417 Z" fill="#CE7058"/>
<path d="M786 212 L792 212 L749 416 L744 416 Z" fill="#5E2A1C" stroke="#1A0A06" stroke-width="0.6"/>
<path d="M765 217 L731 412 M794 210 L760 418 M775 210 L740 414" stroke="#1A0A06" stroke-width="0.9" fill="none"/>
<path d="M725 413 L743 416" stroke="#5E2A1C" stroke-width="2"/>
<!-- shoulder ring lines -->
<ellipse cx="848" cy="216" rx="22" ry="4" transform="rotate(12 848 216)" fill="url(#hl)"/>
<path d="M783 207 L808 198 M808 198 L940 226 M800 205 L940 231" stroke="#1A0A06" stroke-width="1" fill="none"/>
<!-- hex nut -->
<path d="M822 140 Q824 138 830 138 L946 163 Q952 166 951 173 L940 226 L808 198 Z" fill="url(#cun)" stroke="#1A0A06" stroke-width="1"/>
<path d="M826 141 L946 166" stroke="#1A0A06" stroke-width="0.6" opacity="0.6"/>
<path d="M838 141 L897 154 L889 196 L830 185 Z" fill="#EE8668" stroke="#1A0A06" stroke-width="1"/>
<path d="M897 154 L932 162 L924 204 L889 196" fill="none" stroke="#1A0A06" stroke-width="1"/>
<path d="M924 204 L940 211" stroke="#1A0A06" stroke-width="1"/>
<!-- body bottom edge -->
<path d="M725 416 L761 418 L828 431 L923 457" stroke="#4A1E14" stroke-width="3" fill="none"/>
<!-- teal ring -->
<path d="M725 419 L761 420 L828 434 L922 459 L920 470 L897 468 L828 451 L743 437 L725 427 Z" fill="#2A7E88" stroke="#0A3036" stroke-width="0.8"/>
<path d="M725 419 L761 420 L828 434 L922 459 L921 465 L828 445 L761 429 L725 427 Z" fill="url(#tl)" stroke="#0A3036" stroke-width="0.8"/>
<path d="M737 419 L736 428 M745 420 L744 429 M829 434 L827 451 M900 454 L898 468 M905 455 L903 469" stroke="#0A3036" stroke-width="0.9"/>
<path d="M907 457 L906 465" stroke="#6ADCE8" stroke-width="2"/>
<!-- dark gap -->
<path d="M743 437 L828 451 L897 468 L897 478 L828 461 L752 449 Z" fill="#050A08"/>
<!-- green nut -->
<path d="M751 448 L828 460 L897 477 L884 484 L880 503 L871 507 L800 490 L748 476 Z" fill="url(#gr)" stroke="#04100A" stroke-width="1"/>
<path d="M751 449 L828 461 L890 477" stroke="#0A2A18" stroke-width="2" fill="none"/>
<path d="M748 474 L800 488 L871 504 L871 507 L800 492 L748 477 Z" fill="url(#grb)"/>
<path d="M768 457 L827 468 L825 487 L767 480 Z" fill="#4ABC7A" stroke="#04100A" stroke-width="0.9"/>
<path d="M827 468 L864 477 L862 494 L825 487" fill="none" stroke="#04100A" stroke-width="0.9"/>
<path d="M864 477 L882 483 M862 494 L879 503" stroke="#04100A" stroke-width="0.9"/>
<!-- purple top cylinder -->
<path d="M743 195 L769 195 L769 228 L743 230 A10 17.5 0 0 1 743 195 Z" fill="url(#pu)" stroke="#2A0030" stroke-width="1"/>
<ellipse cx="769" cy="211.5" rx="14.5" ry="17" fill="#5A0868" stroke="#2A0030" stroke-width="1.5"/>
<ellipse cx="770" cy="211.5" rx="10" ry="12.5" fill="#7A1090" stroke="#2A0030" stroke-width="1.2"/>
<!-- flange back (slate side) -->
<path d="M741 227 L780 235 L790 246 L795 256 L796 286 L785 288 L780 313 L766 336 L743 354 L716 359 Z" fill="url(#sl)" stroke="#101820" stroke-width="1"/>
<path d="M780 235 L790 246 L778 252 M785 288 L772 296" stroke="#101820" stroke-width="0.8" fill="none"/>
<!-- flange front face -->
<ellipse cx="733" cy="292" rx="37" ry="65" transform="rotate(11 733 292)" fill="#6A86A0" stroke="#101820" stroke-width="1"/>
<ellipse cx="733" cy="292" rx="33" ry="60" transform="rotate(11 733 292)" fill="#7B95AD" stroke="#26303A" stroke-width="0.8"/>
<path d="M706 300 A33 60 0 0 1 750 236" transform="rotate(0)" stroke="#C8DAEA" stroke-width="1" fill="none" opacity="0.7"/>
<ellipse cx="734" cy="292" rx="26" ry="50" transform="rotate(11 734 292)" fill="#22303C" stroke="#101820" stroke-width="1"/>
<ellipse cx="740" cy="294" rx="23.5" ry="47" transform="rotate(11 740 294)" fill="#86A0B6" stroke="#26303A" stroke-width="0.8"/>
<ellipse cx="739" cy="294" rx="20" ry="41" transform="rotate(11 739 294)" fill="none" stroke="#26303A" stroke-width="0.8"/>
<path d="M772 262 Q779 300 764 338" stroke="#D8E8F4" stroke-width="1.2" fill="none" opacity="0.8"/>
<ellipse cx="737.5" cy="294" rx="16.5" ry="29" transform="rotate(11 737.5 294)" fill="#D3D2CE" stroke="#202020" stroke-width="0.9"/>
<path d="M713 283 L724 275 L737 277 L741 290 L734 307 L719 306 L713 296 Z" fill="#C8C8C4" stroke="#202020" stroke-width="0.9"/>
<path d="M724 275 L737 277 L741 290 L727 291 Z" fill="#8E8E8C" stroke="#202020" stroke-width="0.7"/>
<path d="M727 291 L741 290 L734 307 L719 306 Z" fill="#5E5E5C" stroke="#202020" stroke-width="0.7"/>
<path d="M741 227 L743 239 M716 358 L718 346" stroke="#101820" stroke-width="1"/>
<!-- purple bottom-left cylinder -->
<path d="M681 312 Q684 303 697 303 Q707 303 710 310 L711 350 L680 354 Z" fill="url(#pu2)" stroke="#2A0030" stroke-width="1"/>
<ellipse cx="695.5" cy="352" rx="15.5" ry="8.5" transform="rotate(-8 695.5 352)" fill="#6E0C80" stroke="#2A0030" stroke-width="1.2"/>
<!-- purple bottom-right cylinder -->
<path d="M759 313 L789 325 L778 360 Q768 370 752 366 Q740 360 740 352 Z" fill="url(#pu2)" stroke="#2A0030" stroke-width="1"/>
<ellipse cx="773" cy="319.5" rx="16.5" ry="10" transform="rotate(20 773 319.5)" fill="#6A0A7A" stroke="#2A0030" stroke-width="1.2"/>
<ellipse cx="774" cy="320" rx="10" ry="6" transform="rotate(20 774 320)" fill="#3A0444"/>
<!-- axes -->
<defs><linearGradient id="ga" gradientUnits="userSpaceOnUse" x1="668" y1="442" x2="722" y2="456"><stop offset="0" stop-color="#A0E8A0"/><stop offset="0.4" stop-color="#5CC05C"/><stop offset="1" stop-color="#3A9A40"/></linearGradient>
<linearGradient id="ra" gradientUnits="userSpaceOnUse" x1="718" y1="0" x2="728" y2="0"><stop offset="0" stop-color="#F4B0B8"/><stop offset="1" stop-color="#E07888"/></linearGradient></defs>
<path d="M721 454.5 L684 445" stroke="url(#ga)" stroke-width="3"/>
<path d="M668 441.5 L686 440 L683 449 Z" fill="url(#ga)"/>
<path d="M719 457 L700 455" stroke="#5A8AE0" stroke-width="3.5" stroke-linecap="round"/>
<path d="M723 461 L715 503" stroke="url(#ra)" stroke-width="3.5"/>
<path d="M711 519 L708 500 L719 502 Z" fill="#F09AA6"/>
<circle cx="725" cy="455.5" r="7.3" fill="url(#ys)" stroke="#D0C850" stroke-width="0.5"/>
<text x="655" y="444" font-family="Liberation Sans" font-size="13" fill="#78C078" transform="scale(1 1)">Y</text>
<text x="688" y="459" font-family="Liberation Sans" font-size="12" fill="#7098E0">Z</text>
<text x="704" y="536" font-family="Liberation Sans" font-size="13" fill="#F0909C">Y</text>
</g>
</svg>


<div class="a" style="left:1006px;top:104px;width:5px;height:428px;background:#F6F5F2"></div>
<div class="a" style="left:1010px;top:103px;width:7px;height:43px;border-radius:3px 3px 0 0;background:linear-gradient(to right,#FAFAF8,#E2E0DA 70%,#C8C6BF)"></div>
<div class="a" style="left:1011px;top:146px;width:5px;height:386px;border-left:1px solid #9E9C96;border-right:1px solid #9E9C96;background:#E9E7E1"></div>
<div class="a" style="left:1012px;top:527px;width:3px;height:4px;background:#fff"></div>

<!-- status panel -->
<div class="grip" style="left:29px;top:539px;height:56px;width:2px"></div>
<div class="a" style="left:34px;top:539px;width:976px;height:33px;border:1px solid #858380;border-bottom:1px solid #000;box-shadow:inset 4px 2px 0 #FDFDFC;background:linear-gradient(to bottom,#F6F5F2,#EDECE8 50%,#E4E2DC)"></div>
<div class="a" style="left:34px;top:573px;width:979px;height:27px;background:linear-gradient(to bottom,#FBFBFA,#EDECE7 60%,#DAD8D0)"></div>
<div class="a" style="left:0px;top:600px;width:1017px;height:2px;background:#9A9893"></div>
</body></html>
